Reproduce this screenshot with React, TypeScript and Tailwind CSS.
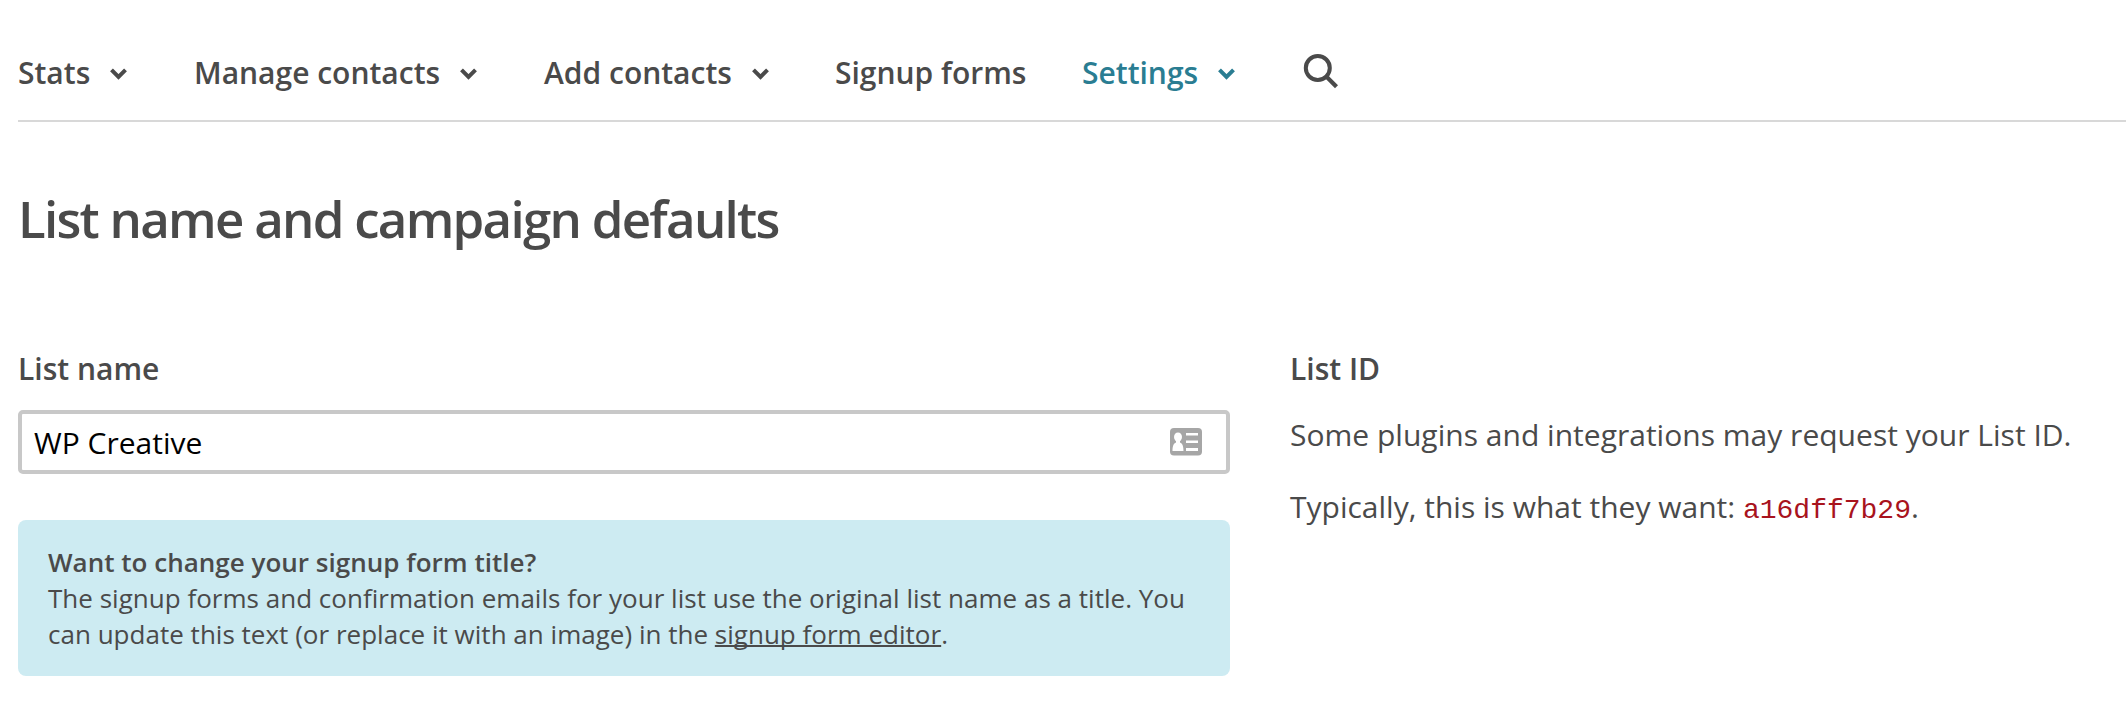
function Chevron() {
  return (
    <svg className="mt-px ml-[19px] h-4 w-[19px]" viewBox="0 0 19 16" fill="none" stroke="currentColor" strokeWidth="4">
      <path d="M2.500 3.800 9.500 10.800 16.500 3.800" />
    </svg>
  );
}

export default function App() {
  return (
    <div className="h-[712px] w-[2126px] overflow-hidden bg-white pl-[18px] font-['Open_Sans',sans-serif] text-[#4a4a4a]">
      <nav className="flex h-[122px] items-start border-b-2 border-[#d8d8d8] pt-[50px] text-[30px] leading-[46px] font-semibold">
        <a className="flex w-[176px] items-center">Stats<Chevron /></a>
        <a className="flex w-[350px] items-center">Manage contacts<Chevron /></a>
        <a className="flex w-[291px] items-center">Add contacts<Chevron /></a>
        <a className="w-[247px]">Signup forms</a>
        <a className="flex w-[221px] items-center text-[#2a7d92]">Settings<Chevron /></a>
        <svg className="mt-[3px] h-9 w-9" viewBox="0 0 36 36" fill="none" stroke="currentColor" strokeWidth="4">
          <circle cx="14.800" cy="15" r="12" />
          <path d="M23.300 23.500 33.500 33.700" strokeWidth="4.200" />
        </svg>
      </nav>
      <h1 className="mt-[61px] text-[51px] leading-[70px] font-semibold tracking-[-1.730px]">List name and campaign defaults</h1>
      <div className="mt-[94px] flex">
        <section className="w-[1212px]">
          <div className="text-[30px] leading-[44px] font-semibold">List name</div>
          <div className="mt-[19px] flex h-[64px] items-center justify-between rounded-[5px] border-4 border-[#c8c8c8] pr-6 pl-3 text-[30px] text-black">
            <span>WP Creative</span>
            <svg className="h-7 w-8" viewBox="0 0 32 28">
              <rect width="32" height="27.500" rx="4" fill="#a6a6a6" />
              <g fill="white">
                <ellipse cx="8" cy="9" rx="4" ry="4.500" />
                <path d="M6 12h4v2.500c2.500 1 3.500 3.500 3.500 8.500h-11c0-5 1-7.500 3.500-8.500z" />
                <path d="M16 5h12v2.500H16zM16 12.500h12V15H16zM16 20h12v3H16z" />
              </g>
            </svg>
          </div>
          <div className="mt-[46px] h-[156px] rounded-lg bg-[#cdebf2] px-[30px] pt-[24px] text-[26px] leading-[36px] tracking-[0.015px]">
            <div className="font-semibold">Want to change your signup form title?</div>
            <div>The signup forms and confirmation emails for your list use the original list name as a title. You can update this text (or replace it with an image) in the <a className="underline decoration-2 [text-decoration-skip-ink:none]">signup form editor</a>.</div>
          </div>
        </section>
        <section className="ml-[60px] text-[30px] leading-[44px]">
          <div className="font-semibold">List ID</div>
          <p className="mt-[22px] tracking-[0.015px]">Some plugins and integrations may request your List ID.</p>
          <p className="mt-[28px]">Typically, this is what they want: <code className="font-['Liberation_Mono',monospace] text-[28px] text-[#a8131d]">a16dff7b29</code>.</p>
        </section>
      </div>
    </div>
  );
}
